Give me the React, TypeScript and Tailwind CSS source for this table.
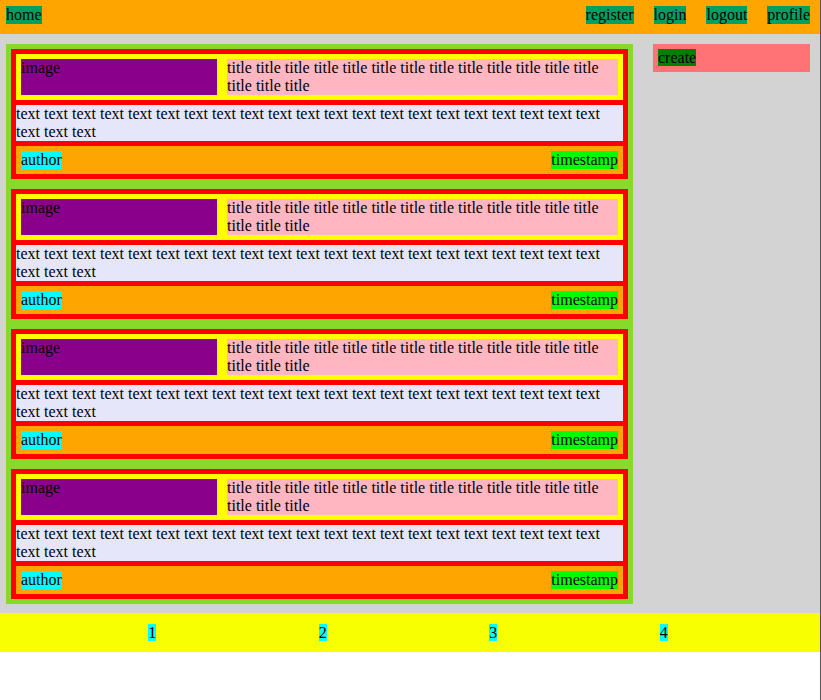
const titleText = Array(16).fill("title").join(" ");
const bodyText = Array(24).fill("text").join(" ");

function Post() {
  return (
    <div className="flex flex-col gap-[5px] bg-[#ff0000] p-[5px]">
      {/* title row */}
      <div className="flex gap-[10px] bg-[#ffff00] p-[5px]">
        <div className="w-[196px] shrink-0 bg-[#8b008b]">image</div>
        <div className="flex-1 bg-[#ffb6c1]">{titleText}</div>
      </div>
      <div className="bg-[#e6e6fa]">{bodyText}</div>
      <div className="flex justify-between bg-[#ffa500] p-[5px]">
        <span className="bg-[#00ffff]">author</span>
        <span className="bg-[#00ff00]">timestamp</span>
      </div>
    </div>
  );
}

export default function App() {
  const links = ["register", "login", "logout", "profile"];
  const pages = [1, 2, 3, 4];

  return (
    <div className="min-h-[700px] w-[821px] border-r border-[#555555] bg-white font-['Liberation_Serif',serif] text-[16px] leading-[18px] text-black">
      {/* Header */}
      <header className="flex h-[34px] items-start justify-between bg-[#ffa500] pl-[6px] pr-[10px] pt-[6px]">
        <span className="bg-[#00a060]">home</span>
        <nav className="flex gap-[20px]">
          {links.map((l) => (
            <span key={l} className="bg-[#00a060]">
              {l}
            </span>
          ))}
        </nav>
      </header>

      {/* Main */}
      <main className="flex items-start gap-[20px] bg-[#d3d3d3] pb-[9px] pl-[6px] pr-[10px] pt-[10px]">
        <div className="flex w-[627px] flex-col gap-[10px] bg-[#87d92a] p-[5px]">
          {pages.map((p) => (
            <Post key={p} />
          ))}
        </div>
        <aside className="w-[157px] bg-[#ff7377] p-[5px]">
          <span className="bg-[#008000]">create</span>
        </aside>
      </main>

      {/* Pagination */}
      <footer className="h-[39px] bg-[#f8ff00] pt-[11px]">
        <div className="ml-[67px] grid w-[682px] grid-cols-4 text-center">
          {pages.map((p) => (
            <div key={p}>
              <span className="bg-[#00ffff]">{p}</span>
            </div>
          ))}
        </div>
      </footer>
    </div>
  );
}
